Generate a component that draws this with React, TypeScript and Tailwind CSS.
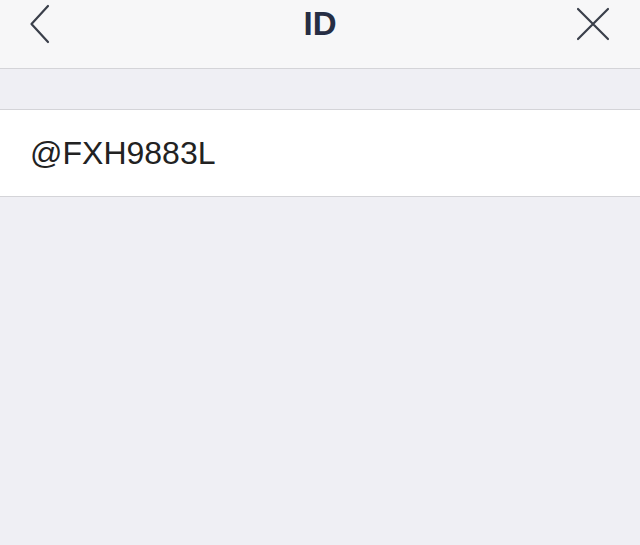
export default function App() {
  return (
    <div
      className="w-[640px] h-[545px] bg-[#efeff4] flex flex-col overflow-hidden"
      style={{ fontFamily: '"Liberation Sans", Arial, sans-serif' }}
    >
      {/* Header */}
      <header className="h-[69px] shrink-0 bg-[#f7f7f8] border-b border-[#d4d4d8] flex items-start justify-between relative">
        <button className="w-[80px] h-[48px] flex items-center pl-[30px]">
          <svg width="20" height="40" viewBox="0 0 20 40" fill="none">
            <path d="M18 2 L1.5 20 L18 38" stroke="#3a3f4a" strokeWidth="2.2" strokeLinecap="round" strokeLinejoin="round" />
          </svg>
        </button>
        <h1 className="absolute left-0 right-0 top-[5px] text-center text-[33px] leading-[38px] font-bold text-[#262e44]">
          ID
        </h1>
        <button className="w-[80px] h-[48px] flex items-center justify-end pr-[30px]">
          <svg width="34" height="34" viewBox="0 0 34 34" fill="none">
            <path d="M2 2 L32 32 M32 2 L2 32" stroke="#3a3f4a" strokeWidth="2.2" strokeLinecap="round" />
          </svg>
        </button>
      </header>

      {/* ID row */}
      <div className="mt-[40px] h-[88px] bg-white border-y border-[#d4d4d8] flex items-center pl-[30px]">
        <span className="text-[32px] text-[#222222] leading-none">@FXH9883L</span>
      </div>
    </div>
  );
}
